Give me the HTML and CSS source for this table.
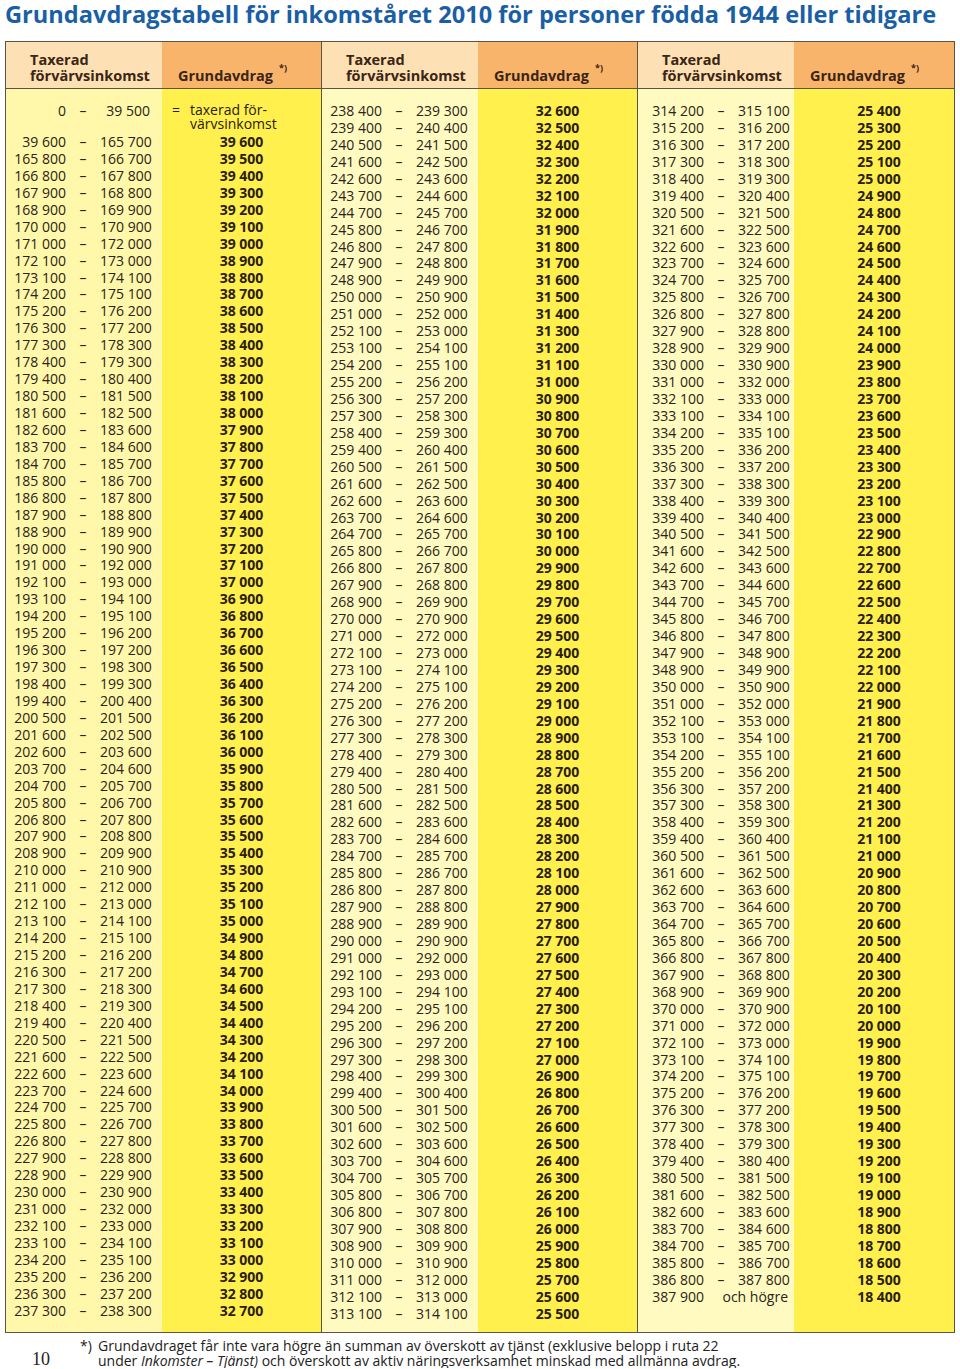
FILE: index.html
```html
<!DOCTYPE html>
<html lang="sv">
<head>
<meta charset="utf-8">
<title>Grundavdragstabell 2010</title>
<link rel="stylesheet" href="styles.css">
</head>
<body>
<h1 class="title">Grundavdragstabell för inkomståret 2010 för personer födda 1944 eller tidigare</h1>
<div class="table">
  <section class="group g1">
    <div class="head inc">Taxerad<br>förvärvsinkomst</div>
    <div class="head ded">Grundavdrag<span class="sup">*)</span></div>
    <div class="body inc">
      <p class="first"><span>0</span><span>–</span><span>39 500</span></p>
      <p><span>39 600</span><span>–</span><span>165 700</span></p>
      <p><span>165 800</span><span>–</span><span>166 700</span></p>
      <p><span>166 800</span><span>–</span><span>167 800</span></p>
      <p><span>167 900</span><span>–</span><span>168 800</span></p>
      <p><span>168 900</span><span>–</span><span>169 900</span></p>
      <p><span>170 000</span><span>–</span><span>170 900</span></p>
      <p><span>171 000</span><span>–</span><span>172 000</span></p>
      <p><span>172 100</span><span>–</span><span>173 000</span></p>
      <p><span>173 100</span><span>–</span><span>174 100</span></p>
      <p><span>174 200</span><span>–</span><span>175 100</span></p>
      <p><span>175 200</span><span>–</span><span>176 200</span></p>
      <p><span>176 300</span><span>–</span><span>177 200</span></p>
      <p><span>177 300</span><span>–</span><span>178 300</span></p>
      <p><span>178 400</span><span>–</span><span>179 300</span></p>
      <p><span>179 400</span><span>–</span><span>180 400</span></p>
      <p><span>180 500</span><span>–</span><span>181 500</span></p>
      <p><span>181 600</span><span>–</span><span>182 500</span></p>
      <p><span>182 600</span><span>–</span><span>183 600</span></p>
      <p><span>183 700</span><span>–</span><span>184 600</span></p>
      <p><span>184 700</span><span>–</span><span>185 700</span></p>
      <p><span>185 800</span><span>–</span><span>186 700</span></p>
      <p><span>186 800</span><span>–</span><span>187 800</span></p>
      <p><span>187 900</span><span>–</span><span>188 800</span></p>
      <p><span>188 900</span><span>–</span><span>189 900</span></p>
      <p><span>190 000</span><span>–</span><span>190 900</span></p>
      <p><span>191 000</span><span>–</span><span>192 000</span></p>
      <p><span>192 100</span><span>–</span><span>193 000</span></p>
      <p><span>193 100</span><span>–</span><span>194 100</span></p>
      <p><span>194 200</span><span>–</span><span>195 100</span></p>
      <p><span>195 200</span><span>–</span><span>196 200</span></p>
      <p><span>196 300</span><span>–</span><span>197 200</span></p>
      <p><span>197 300</span><span>–</span><span>198 300</span></p>
      <p><span>198 400</span><span>–</span><span>199 300</span></p>
      <p><span>199 400</span><span>–</span><span>200 400</span></p>
      <p><span>200 500</span><span>–</span><span>201 500</span></p>
      <p><span>201 600</span><span>–</span><span>202 500</span></p>
      <p><span>202 600</span><span>–</span><span>203 600</span></p>
      <p><span>203 700</span><span>–</span><span>204 600</span></p>
      <p><span>204 700</span><span>–</span><span>205 700</span></p>
      <p><span>205 800</span><span>–</span><span>206 700</span></p>
      <p><span>206 800</span><span>–</span><span>207 800</span></p>
      <p><span>207 900</span><span>–</span><span>208 800</span></p>
      <p><span>208 900</span><span>–</span><span>209 900</span></p>
      <p><span>210 000</span><span>–</span><span>210 900</span></p>
      <p><span>211 000</span><span>–</span><span>212 000</span></p>
      <p><span>212 100</span><span>–</span><span>213 000</span></p>
      <p><span>213 100</span><span>–</span><span>214 100</span></p>
      <p><span>214 200</span><span>–</span><span>215 100</span></p>
      <p><span>215 200</span><span>–</span><span>216 200</span></p>
      <p><span>216 300</span><span>–</span><span>217 200</span></p>
      <p><span>217 300</span><span>–</span><span>218 300</span></p>
      <p><span>218 400</span><span>–</span><span>219 300</span></p>
      <p><span>219 400</span><span>–</span><span>220 400</span></p>
      <p><span>220 500</span><span>–</span><span>221 500</span></p>
      <p><span>221 600</span><span>–</span><span>222 500</span></p>
      <p><span>222 600</span><span>–</span><span>223 600</span></p>
      <p><span>223 700</span><span>–</span><span>224 600</span></p>
      <p><span>224 700</span><span>–</span><span>225 700</span></p>
      <p><span>225 800</span><span>–</span><span>226 700</span></p>
      <p><span>226 800</span><span>–</span><span>227 800</span></p>
      <p><span>227 900</span><span>–</span><span>228 800</span></p>
      <p><span>228 900</span><span>–</span><span>229 900</span></p>
      <p><span>230 000</span><span>–</span><span>230 900</span></p>
      <p><span>231 000</span><span>–</span><span>232 000</span></p>
      <p><span>232 100</span><span>–</span><span>233 000</span></p>
      <p><span>233 100</span><span>–</span><span>234 100</span></p>
      <p><span>234 200</span><span>–</span><span>235 100</span></p>
      <p><span>235 200</span><span>–</span><span>236 200</span></p>
      <p><span>236 300</span><span>–</span><span>237 200</span></p>
      <p><span>237 300</span><span>–</span><span>238 300</span></p>
    </div>
    <div class="body ded">
      <p class="first"><span>=</span><span>taxerad för-<br>värvsinkomst</span></p>
      <p>39 600</p><p>39 500</p><p>39 400</p><p>39 300</p><p>39 200</p><p>39 100</p><p>39 000</p>
      <p>38 900</p><p>38 800</p><p>38 700</p><p>38 600</p><p>38 500</p><p>38 400</p><p>38 300</p><p>38 200</p><p>38 100</p><p>38 000</p>
      <p>37 900</p><p>37 800</p><p>37 700</p><p>37 600</p><p>37 500</p><p>37 400</p><p>37 300</p><p>37 200</p><p>37 100</p><p>37 000</p>
      <p>36 900</p><p>36 800</p><p>36 700</p><p>36 600</p><p>36 500</p><p>36 400</p><p>36 300</p><p>36 200</p><p>36 100</p><p>36 000</p>
      <p>35 900</p><p>35 800</p><p>35 700</p><p>35 600</p><p>35 500</p><p>35 400</p><p>35 300</p><p>35 200</p><p>35 100</p><p>35 000</p>
      <p>34 900</p><p>34 800</p><p>34 700</p><p>34 600</p><p>34 500</p><p>34 400</p><p>34 300</p><p>34 200</p><p>34 100</p><p>34 000</p>
      <p>33 900</p><p>33 800</p><p>33 700</p><p>33 600</p><p>33 500</p><p>33 400</p><p>33 300</p><p>33 200</p><p>33 100</p><p>33 000</p>
      <p>32 900</p><p>32 800</p><p>32 700</p>
    </div>
  </section>
  <section class="group g2">
    <div class="head inc">Taxerad<br>förvärvsinkomst</div>
    <div class="head ded">Grundavdrag<span class="sup">*)</span></div>
    <div class="body inc">
      <p><span>238 400</span><span>–</span><span>239 300</span></p>
      <p><span>239 400</span><span>–</span><span>240 400</span></p>
      <p><span>240 500</span><span>–</span><span>241 500</span></p>
      <p><span>241 600</span><span>–</span><span>242 500</span></p>
      <p><span>242 600</span><span>–</span><span>243 600</span></p>
      <p><span>243 700</span><span>–</span><span>244 600</span></p>
      <p><span>244 700</span><span>–</span><span>245 700</span></p>
      <p><span>245 800</span><span>–</span><span>246 700</span></p>
      <p><span>246 800</span><span>–</span><span>247 800</span></p>
      <p><span>247 900</span><span>–</span><span>248 800</span></p>
      <p><span>248 900</span><span>–</span><span>249 900</span></p>
      <p><span>250 000</span><span>–</span><span>250 900</span></p>
      <p><span>251 000</span><span>–</span><span>252 000</span></p>
      <p><span>252 100</span><span>–</span><span>253 000</span></p>
      <p><span>253 100</span><span>–</span><span>254 100</span></p>
      <p><span>254 200</span><span>–</span><span>255 100</span></p>
      <p><span>255 200</span><span>–</span><span>256 200</span></p>
      <p><span>256 300</span><span>–</span><span>257 200</span></p>
      <p><span>257 300</span><span>–</span><span>258 300</span></p>
      <p><span>258 400</span><span>–</span><span>259 300</span></p>
      <p><span>259 400</span><span>–</span><span>260 400</span></p>
      <p><span>260 500</span><span>–</span><span>261 500</span></p>
      <p><span>261 600</span><span>–</span><span>262 500</span></p>
      <p><span>262 600</span><span>–</span><span>263 600</span></p>
      <p><span>263 700</span><span>–</span><span>264 600</span></p>
      <p><span>264 700</span><span>–</span><span>265 700</span></p>
      <p><span>265 800</span><span>–</span><span>266 700</span></p>
      <p><span>266 800</span><span>–</span><span>267 800</span></p>
      <p><span>267 900</span><span>–</span><span>268 800</span></p>
      <p><span>268 900</span><span>–</span><span>269 900</span></p>
      <p><span>270 000</span><span>–</span><span>270 900</span></p>
      <p><span>271 000</span><span>–</span><span>272 000</span></p>
      <p><span>272 100</span><span>–</span><span>273 000</span></p>
      <p><span>273 100</span><span>–</span><span>274 100</span></p>
      <p><span>274 200</span><span>–</span><span>275 100</span></p>
      <p><span>275 200</span><span>–</span><span>276 200</span></p>
      <p><span>276 300</span><span>–</span><span>277 200</span></p>
      <p><span>277 300</span><span>–</span><span>278 300</span></p>
      <p><span>278 400</span><span>–</span><span>279 300</span></p>
      <p><span>279 400</span><span>–</span><span>280 400</span></p>
      <p><span>280 500</span><span>–</span><span>281 500</span></p>
      <p><span>281 600</span><span>–</span><span>282 500</span></p>
      <p><span>282 600</span><span>–</span><span>283 600</span></p>
      <p><span>283 700</span><span>–</span><span>284 600</span></p>
      <p><span>284 700</span><span>–</span><span>285 700</span></p>
      <p><span>285 800</span><span>–</span><span>286 700</span></p>
      <p><span>286 800</span><span>–</span><span>287 800</span></p>
      <p><span>287 900</span><span>–</span><span>288 800</span></p>
      <p><span>288 900</span><span>–</span><span>289 900</span></p>
      <p><span>290 000</span><span>–</span><span>290 900</span></p>
      <p><span>291 000</span><span>–</span><span>292 000</span></p>
      <p><span>292 100</span><span>–</span><span>293 000</span></p>
      <p><span>293 100</span><span>–</span><span>294 100</span></p>
      <p><span>294 200</span><span>–</span><span>295 100</span></p>
      <p><span>295 200</span><span>–</span><span>296 200</span></p>
      <p><span>296 300</span><span>–</span><span>297 200</span></p>
      <p><span>297 300</span><span>–</span><span>298 300</span></p>
      <p><span>298 400</span><span>–</span><span>299 300</span></p>
      <p><span>299 400</span><span>–</span><span>300 400</span></p>
      <p><span>300 500</span><span>–</span><span>301 500</span></p>
      <p><span>301 600</span><span>–</span><span>302 500</span></p>
      <p><span>302 600</span><span>–</span><span>303 600</span></p>
      <p><span>303 700</span><span>–</span><span>304 600</span></p>
      <p><span>304 700</span><span>–</span><span>305 700</span></p>
      <p><span>305 800</span><span>–</span><span>306 700</span></p>
      <p><span>306 800</span><span>–</span><span>307 800</span></p>
      <p><span>307 900</span><span>–</span><span>308 800</span></p>
      <p><span>308 900</span><span>–</span><span>309 900</span></p>
      <p><span>310 000</span><span>–</span><span>310 900</span></p>
      <p><span>311 000</span><span>–</span><span>312 000</span></p>
      <p><span>312 100</span><span>–</span><span>313 000</span></p>
      <p><span>313 100</span><span>–</span><span>314 100</span></p>
    </div>
    <div class="body ded">
      <p>32 600</p><p>32 500</p><p>32 400</p><p>32 300</p><p>32 200</p><p>32 100</p><p>32 000</p>
      <p>31 900</p><p>31 800</p><p>31 700</p><p>31 600</p><p>31 500</p><p>31 400</p><p>31 300</p><p>31 200</p><p>31 100</p><p>31 000</p>
      <p>30 900</p><p>30 800</p><p>30 700</p><p>30 600</p><p>30 500</p><p>30 400</p><p>30 300</p><p>30 200</p><p>30 100</p><p>30 000</p>
      <p>29 900</p><p>29 800</p><p>29 700</p><p>29 600</p><p>29 500</p><p>29 400</p><p>29 300</p><p>29 200</p><p>29 100</p><p>29 000</p>
      <p>28 900</p><p>28 800</p><p>28 700</p><p>28 600</p><p>28 500</p><p>28 400</p><p>28 300</p><p>28 200</p><p>28 100</p><p>28 000</p>
      <p>27 900</p><p>27 800</p><p>27 700</p><p>27 600</p><p>27 500</p><p>27 400</p><p>27 300</p><p>27 200</p><p>27 100</p><p>27 000</p>
      <p>26 900</p><p>26 800</p><p>26 700</p><p>26 600</p><p>26 500</p><p>26 400</p><p>26 300</p><p>26 200</p><p>26 100</p><p>26 000</p>
      <p>25 900</p><p>25 800</p><p>25 700</p><p>25 600</p><p>25 500</p>
    </div>
  </section>
  <section class="group g3">
    <div class="head inc">Taxerad<br>förvärvsinkomst</div>
    <div class="head ded">Grundavdrag<span class="sup">*)</span></div>
    <div class="body inc">
      <p><span>314 200</span><span>–</span><span>315 100</span></p>
      <p><span>315 200</span><span>–</span><span>316 200</span></p>
      <p><span>316 300</span><span>–</span><span>317 200</span></p>
      <p><span>317 300</span><span>–</span><span>318 300</span></p>
      <p><span>318 400</span><span>–</span><span>319 300</span></p>
      <p><span>319 400</span><span>–</span><span>320 400</span></p>
      <p><span>320 500</span><span>–</span><span>321 500</span></p>
      <p><span>321 600</span><span>–</span><span>322 500</span></p>
      <p><span>322 600</span><span>–</span><span>323 600</span></p>
      <p><span>323 700</span><span>–</span><span>324 600</span></p>
      <p><span>324 700</span><span>–</span><span>325 700</span></p>
      <p><span>325 800</span><span>–</span><span>326 700</span></p>
      <p><span>326 800</span><span>–</span><span>327 800</span></p>
      <p><span>327 900</span><span>–</span><span>328 800</span></p>
      <p><span>328 900</span><span>–</span><span>329 900</span></p>
      <p><span>330 000</span><span>–</span><span>330 900</span></p>
      <p><span>331 000</span><span>–</span><span>332 000</span></p>
      <p><span>332 100</span><span>–</span><span>333 000</span></p>
      <p><span>333 100</span><span>–</span><span>334 100</span></p>
      <p><span>334 200</span><span>–</span><span>335 100</span></p>
      <p><span>335 200</span><span>–</span><span>336 200</span></p>
      <p><span>336 300</span><span>–</span><span>337 200</span></p>
      <p><span>337 300</span><span>–</span><span>338 300</span></p>
      <p><span>338 400</span><span>–</span><span>339 300</span></p>
      <p><span>339 400</span><span>–</span><span>340 400</span></p>
      <p><span>340 500</span><span>–</span><span>341 500</span></p>
      <p><span>341 600</span><span>–</span><span>342 500</span></p>
      <p><span>342 600</span><span>–</span><span>343 600</span></p>
      <p><span>343 700</span><span>–</span><span>344 600</span></p>
      <p><span>344 700</span><span>–</span><span>345 700</span></p>
      <p><span>345 800</span><span>–</span><span>346 700</span></p>
      <p><span>346 800</span><span>–</span><span>347 800</span></p>
      <p><span>347 900</span><span>–</span><span>348 900</span></p>
      <p><span>348 900</span><span>–</span><span>349 900</span></p>
      <p><span>350 000</span><span>–</span><span>350 900</span></p>
      <p><span>351 000</span><span>–</span><span>352 000</span></p>
      <p><span>352 100</span><span>–</span><span>353 000</span></p>
      <p><span>353 100</span><span>–</span><span>354 100</span></p>
      <p><span>354 200</span><span>–</span><span>355 100</span></p>
      <p><span>355 200</span><span>–</span><span>356 200</span></p>
      <p><span>356 300</span><span>–</span><span>357 200</span></p>
      <p><span>357 300</span><span>–</span><span>358 300</span></p>
      <p><span>358 400</span><span>–</span><span>359 300</span></p>
      <p><span>359 400</span><span>–</span><span>360 400</span></p>
      <p><span>360 500</span><span>–</span><span>361 500</span></p>
      <p><span>361 600</span><span>–</span><span>362 500</span></p>
      <p><span>362 600</span><span>–</span><span>363 600</span></p>
      <p><span>363 700</span><span>–</span><span>364 600</span></p>
      <p><span>364 700</span><span>–</span><span>365 700</span></p>
      <p><span>365 800</span><span>–</span><span>366 700</span></p>
      <p><span>366 800</span><span>–</span><span>367 800</span></p>
      <p><span>367 900</span><span>–</span><span>368 800</span></p>
      <p><span>368 900</span><span>–</span><span>369 900</span></p>
      <p><span>370 000</span><span>–</span><span>370 900</span></p>
      <p><span>371 000</span><span>–</span><span>372 000</span></p>
      <p><span>372 100</span><span>–</span><span>373 000</span></p>
      <p><span>373 100</span><span>–</span><span>374 100</span></p>
      <p><span>374 200</span><span>–</span><span>375 100</span></p>
      <p><span>375 200</span><span>–</span><span>376 200</span></p>
      <p><span>376 300</span><span>–</span><span>377 200</span></p>
      <p><span>377 300</span><span>–</span><span>378 300</span></p>
      <p><span>378 400</span><span>–</span><span>379 300</span></p>
      <p><span>379 400</span><span>–</span><span>380 400</span></p>
      <p><span>380 500</span><span>–</span><span>381 500</span></p>
      <p><span>381 600</span><span>–</span><span>382 500</span></p>
      <p><span>382 600</span><span>–</span><span>383 600</span></p>
      <p><span>383 700</span><span>–</span><span>384 600</span></p>
      <p><span>384 700</span><span>–</span><span>385 700</span></p>
      <p><span>385 800</span><span>–</span><span>386 700</span></p>
      <p><span>386 800</span><span>–</span><span>387 800</span></p>
      <p><span>387 900</span><span class="rest">och högre</span></p>
    </div>
    <div class="body ded">
      <p>25 400</p><p>25 300</p><p>25 200</p><p>25 100</p><p>25 000</p>
      <p>24 900</p><p>24 800</p><p>24 700</p><p>24 600</p><p>24 500</p><p>24 400</p><p>24 300</p><p>24 200</p><p>24 100</p><p>24 000</p>
      <p>23 900</p><p>23 800</p><p>23 700</p><p>23 600</p><p>23 500</p><p>23 400</p><p>23 300</p><p>23 200</p><p>23 100</p><p>23 000</p>
      <p>22 900</p><p>22 800</p><p>22 700</p><p>22 600</p><p>22 500</p><p>22 400</p><p>22 300</p><p>22 200</p><p>22 100</p><p>22 000</p>
      <p>21 900</p><p>21 800</p><p>21 700</p><p>21 600</p><p>21 500</p><p>21 400</p><p>21 300</p><p>21 200</p><p>21 100</p><p>21 000</p>
      <p>20 900</p><p>20 800</p><p>20 700</p><p>20 600</p><p>20 500</p><p>20 400</p><p>20 300</p><p>20 200</p><p>20 100</p><p>20 000</p>
      <p>19 900</p><p>19 800</p><p>19 700</p><p>19 600</p><p>19 500</p><p>19 400</p><p>19 300</p><p>19 200</p><p>19 100</p><p>19 000</p>
      <p>18 900</p><p>18 800</p><p>18 700</p><p>18 600</p><p>18 500</p><p>18 400</p>
    </div>
  </section>
</div>
<footer class="foot">
  <span class="pageno">10</span>
  <span class="mark">*)</span>
  <p class="note">Grundavdraget får inte vara högre än summan av överskott av tjänst (exklusive belopp i ruta 22<br>under <em>Inkomster – Tjänst)</em> och överskott av aktiv näringsverksamhet minskad med allmänna avdrag.</p>
</footer>
</body>
</html>
```

FILE: styles.css
```css
html, body {
  margin: 0;
  padding: 0;
  background: #ffffff;
}

body {
  font-family: "Open Sans", "DejaVu Sans", sans-serif;
  color: #2a2418;
}

.title {
  margin: 0;
  padding-left: 5px;
  font-size: 23.6px;
  line-height: 28px;
  font-weight: 700;
  color: #1a5fa6;
  white-space: nowrap;
}

.table {
  margin: 13px 0 0 5px;
  width: 950px;
  box-sizing: border-box;
  border: 1.5px solid #5a5543;
  display: grid;
  grid-template-columns: 1fr 1fr 1fr;
}

.group {
  display: grid;
  grid-template-columns: 156px 1fr;
  grid-template-rows: 47px auto;
  border-right: 1.5px solid #5a5543;
}

.group.g3 {
  border-right: none;
}

.head {
  display: flex;
  align-items: flex-end;
  box-sizing: border-box;
  padding-bottom: 5px;
  font-size: 14.5px;
  line-height: 15.5px;
  font-weight: 700;
  color: #3a2516;
  border-bottom: 1.5px solid #5a5543;
}

.head.inc {
  background: #fde1b4;
  padding-left: 24px;
}

.head.ded {
  background: #f9b46c;
  padding-left: 16px;
}

.head .sup {
  font-size: 9px;
  line-height: 9px;
  margin-left: 6px;
  align-self: flex-end;
  margin-bottom: 11px;
}

.body {
  padding: 14px 0 9px;
  font-size: 14px;
}

.body p {
  margin: 0;
  height: 16.94px;
  line-height: 16.94px;
  white-space: nowrap;
}

.body.inc {
  background: #fff7a9;
}

.g2 .body.inc,
.g3 .body.inc {
  background: #fffac0;
}

.body.inc p {
  display: grid;
  grid-template-columns: 60px 34px 50px;
}

.g3 .body.inc p {
  padding-left: 6px;
}

.body.inc p span:nth-child(1) {
  text-align: right;
}

.body.inc p span:nth-child(2) {
  text-align: center;
}

.body.inc p span:nth-child(3) {
  text-align: right;
}

.body.inc p span.rest:nth-child(2) {
  grid-column: 2 / 4;
  text-align: right;
}

.body.ded {
  background: #fff04e;
}

.body.ded p {
  text-align: center;
  font-weight: 700;
  color: #2a2010;
}

.g3 .body.ded p {
  padding-left: 10px;
}

.body p.first {
  height: 31px;
}

.body.ded p.first {
  display: grid;
  grid-template-columns: 18px 1fr;
  padding-left: 10px;
  text-align: left;
  font-weight: 400;
  line-height: 14px;
  padding-top: 0;
  box-sizing: border-box;
}

.foot {
  display: grid;
  grid-template-columns: 80px 18px 1fr;
  align-items: end;
  margin-top: 5px;
}

.pageno {
  font-family: "Liberation Serif", "Times New Roman", serif;
  font-size: 18px;
  line-height: 18px;
  padding-left: 32px;
  color: #222;
}

.mark {
  align-self: start;
  font-size: 14px;
  line-height: 15px;
  color: #222;
}

.note {
  margin: 0;
  font-size: 14px;
  line-height: 15px;
  color: #222;
  white-space: nowrap;
}

.note em {
  font-style: italic;
}
```
